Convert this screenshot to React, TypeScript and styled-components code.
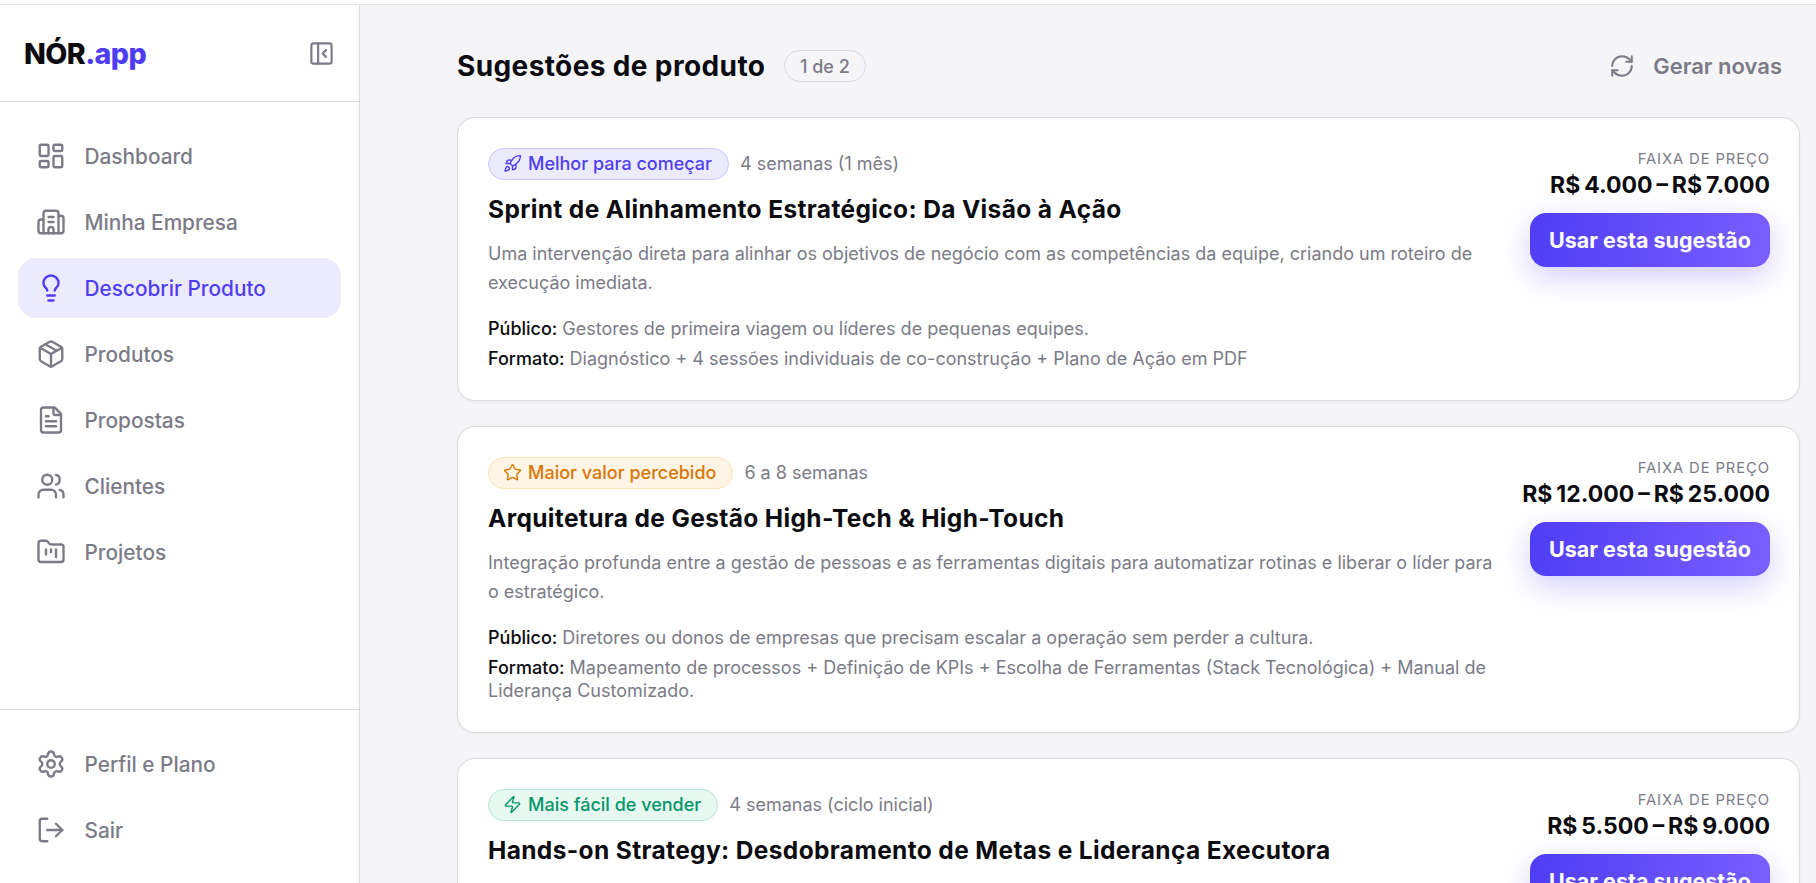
import * as React from "react";
import styled, {createGlobalStyle} from "styled-components";
import {
  Building2,
  FileText,
  FolderKanban,
  LayoutDashboard,
  Lightbulb,
  LogOut,
  Package,
  PanelLeftClose,
  RefreshCw,
  Rocket,
  Settings,
  Star,
  Users,
  Zap,
} from "lucide-react";

const headingFont = `"Inter", "Liberation Sans", sans-serif`;

const GlobalStyle = createGlobalStyle`
  html, body {
    margin: 0;
    height: 100%;
    overflow: hidden;
    background: #f5f5f8;
    font-family: "Inter", "Liberation Sans", sans-serif;
  }
  #root { height: 100%; }
`;

const Page = styled.div`
  height: 883px;
  display: flex;
  flex-direction: column;
  overflow: hidden;
`;

const TopStrip = styled.div`
  flex: none;
  height: 4px;
  background: #fff;
  border-bottom: 1px solid #e2e2e6;
`;

const Shell = styled.div`
  flex: 1;
  min-height: 0;
  display: flex;
`;

const Sidebar = styled.aside`
  flex: none;
  box-sizing: border-box;
  width: 360px;
  display: flex;
  flex-direction: column;
  background: #fff;
  border-right: 1px solid #d9d9de;
`;

const SidebarHead = styled.div`
  flex: none;
  box-sizing: border-box;
  height: 97px;
  padding: 0 24px 0 24px;
  display: flex;
  align-items: center;
  justify-content: space-between;
  border-bottom: 1px solid #d9d9de;
`;

const Logo = styled.div`
  font-family: ${headingFont};
  font-weight: 800;
  font-size: 28.6px;
  letter-spacing: -0.6px;
  color: #0b0b10;
  span { color: #4f3df5; }
`;

const CollapseButton = styled.div`
  display: flex;
  color: #7b7b88;
`;

const NavList = styled.nav`
  flex: 1;
  padding: 24px 18px 0;
  display: flex;
  flex-direction: column;
  gap: 6px;
`;

const BottomNav = styled.nav`
  flex: none;
  box-sizing: border-box;
  height: 174px;
  padding: 24px 18px 0;
  display: flex;
  flex-direction: column;
  gap: 6px;
  border-top: 1px solid #d9d9de;
`;

const NavItem = styled.a<{$active?: boolean}>`
  height: 60px;
  padding: 0 18px;
  display: flex;
  align-items: center;
  gap: 18.5px;
  border-radius: 18px;
  font-size: 20.8px;
  font-weight: 500;
  color: ${(p) => (p.$active ? "#4f3df5" : "#7b7b88")};
  background: ${(p) => (p.$active ? "#ecebfd" : "transparent")};
`;

const Main = styled.main`
  flex: 1;
  min-width: 0;
  padding: 0 16px 0 97px;
  overflow: hidden;
`;

const Header = styled.header`
  box-sizing: border-box;
  height: 112px;
  padding-top: 10px;
  display: flex;
  align-items: center;
  justify-content: space-between;
`;

const HeaderLeft = styled.div`
  display: flex;
  align-items: center;
  gap: 18.5px;
`;

const PageTitle = styled.h1`
  margin: 0;
  font-family: ${headingFont};
  font-size: 28px;
  letter-spacing: 0.38px;
  font-weight: 700;
  color: #0b0b10;
`;

const CountPill = styled.span`
  box-sizing: border-box;
  width: 82px;
  height: 32px;
  display: flex;
  align-items: center;
  justify-content: center;
  border: 1px solid #d9d9de;
  border-radius: 16px;
  font-size: 18px;
  font-weight: 500;
  color: #7b7b88;
`;

const RegenerateButton = styled.div`
  padding-right: 18px;
  display: flex;
  align-items: center;
  gap: 18px;
  font-family: ${headingFont};
  font-size: 22px;
  font-weight: 600;
  color: #7b7b88;
`;

const CardList = styled.div`
  display: flex;
  flex-direction: column;
  gap: 25px;
`;

const Card = styled.article`
  box-sizing: border-box;
  padding: 30px 29px 30px 30px;
  display: flex;
  justify-content: space-between;
  gap: 32px;
  background: #fff;
  border: 1px solid #d9d9de;
  border-radius: 18px;
  box-shadow: 0 1px 3px rgba(20, 20, 40, 0.05);
`;

const CardBody = styled.div`
  flex: 1;
  min-width: 0;
`;

const TagRow = styled.div`
  height: 32px;
  display: flex;
  align-items: center;
  gap: 11.5px;
`;

const tagColors = {
  violet: {bg: "#ecebfd", border: "#c9c5fa", fg: "#4f3df5"},
  amber: {bg: "#fff4e5", border: "#fde3b8", fg: "#d97706"},
  green: {bg: "#e7f8f1", border: "#b5e8d3", fg: "#059669"},
};
type TagTone = keyof typeof tagColors;

const Tag = styled.span<{$tone: TagTone}>`
  box-sizing: border-box;
  height: 32px;
  padding: 0 15.5px 1px 14px;
  display: flex;
  align-items: center;
  gap: 6px;
  border-radius: 16px;
  font-size: 18px;
  font-weight: 500;
  color: ${(p) => tagColors[p.$tone].fg};
  background: ${(p) => tagColors[p.$tone].bg};
  border: 1px solid ${(p) => tagColors[p.$tone].border};
`;

const Duration = styled.span`
  padding-bottom: 1px;
  font-size: 18px;
  color: #7b7b88;
`;

const CardTitle = styled.h2`
  margin: 11px 0 0;
  font-family: ${headingFont};
  font-size: 24.5px;
  letter-spacing: 0.36px;
  line-height: 36px;
  font-weight: 700;
  color: #0b0b10;
`;

const Description = styled.p`
  margin: 13px 0 0;
  font-size: 18px;
  line-height: 28.95px;
  color: #7b7b88;
`;

const DetailBlock = styled.div`
  margin-top: 19px;
  display: flex;
  flex-direction: column;
  gap: 6.9px;
`;

const Detail = styled.p`
  margin: 0;
  font-size: 18px;
  line-height: 23.16px;
  color: #7b7b88;
  b {
    font-weight: 500;
    color: #0b0b10;
  }
`;

const PriceColumn = styled.div`
  flex: none;
  width: 240px;
  display: flex;
  flex-direction: column;
  align-items: flex-end;
`;

const PriceLabel = styled.div`
  font-size: 14.8px;
  line-height: 22px;
  letter-spacing: 0.9px;
  color: #7b7b88;
`;

const PriceValue = styled.div`
  margin-top: 1px;
  font-family: ${headingFont};
  font-size: 23px;
  word-spacing: -1.5px;
  line-height: 29px;
  font-weight: 700;
  white-space: nowrap;
  color: #0b0b10;
`;

const UseButton = styled.button`
  margin-top: 13px;
  box-sizing: border-box;
  width: 240px;
  height: 54px;
  flex: none;
  border: 0;
  border-radius: 16px;
  font-family: ${headingFont};
  font-size: 21.5px;
  font-weight: 700;
  color: #fff;
  background: linear-gradient(100deg, #4f3df5, #7a5fff);
  box-shadow: 0 10px 30px rgba(79, 61, 245, 0.25);
`;

const mainNav = [
  {label: "Dashboard", icon: LayoutDashboard},
  {label: "Minha Empresa", icon: Building2},
  {label: "Descobrir Produto", icon: Lightbulb, active: true},
  {label: "Produtos", icon: Package},
  {label: "Propostas", icon: FileText},
  {label: "Clientes", icon: Users},
  {label: "Projetos", icon: FolderKanban},
];

const suggestions = [
  {
    tone: "violet" as TagTone,
    tagIcon: Rocket,
    tag: "Melhor para começar",
    duration: "4 semanas (1 mês)",
    title: "Sprint de Alinhamento Estratégico: Da Visão à Ação",
    description:
      "Uma intervenção direta para alinhar os objetivos de negócio com as competências da equipe, criando um roteiro de execução imediata.",
    audience: "Gestores de primeira viagem ou líderes de pequenas equipes.",
    format: "Diagnóstico + 4 sessões individuais de co-construção + Plano de Ação em PDF",
    price: "R$ 4.000 – R$ 7.000",
  },
  {
    tone: "amber" as TagTone,
    tagIcon: Star,
    tag: "Maior valor percebido",
    duration: "6 a 8 semanas",
    title: "Arquitetura de Gestão High-Tech & High-Touch",
    description:
      "Integração profunda entre a gestão de pessoas e as ferramentas digitais para automatizar rotinas e liberar o líder para o estratégico.",
    audience: "Diretores ou donos de empresas que precisam escalar a operação sem perder a cultura.",
    format:
      "Mapeamento de processos + Definição de KPIs + Escolha de Ferramentas (Stack Tecnológica) + Manual de Liderança Customizado.",
    price: "R$ 12.000 – R$ 25.000",
  },
  {
    tone: "green" as TagTone,
    tagIcon: Zap,
    tag: "Mais fácil de vender",
    duration: "4 semanas (ciclo inicial)",
    title: "Hands-on Strategy: Desdobramento de Metas e Liderança Executora",
    price: "R$ 5.500 – R$ 9.000",
  },
];

export default function App() {
  return (
    <Page>
      <GlobalStyle />
      <TopStrip />
      <Shell>
        <Sidebar>
          <SidebarHead>
            <Logo>
              NÓR<span>.app</span>
            </Logo>
            <CollapseButton>
              <PanelLeftClose size={27} strokeWidth={1.9} />
            </CollapseButton>
          </SidebarHead>
          <NavList>
            {mainNav.map(({label, icon: Icon, active}) => (
              <NavItem key={label} $active={active}>
                <Icon size={30} strokeWidth={1.9} />
                {label}
              </NavItem>
            ))}
          </NavList>
          <BottomNav>
            <NavItem>
              <Settings size={30} strokeWidth={1.9} />
              Perfil e Plano
            </NavItem>
            <NavItem>
              <LogOut size={30} strokeWidth={1.9} />
              Sair
            </NavItem>
          </BottomNav>
        </Sidebar>
        <Main>
          <Header>
            <HeaderLeft>
              <PageTitle>Sugestões de produto</PageTitle>
              <CountPill>1 de 2</CountPill>
            </HeaderLeft>
            <RegenerateButton>
              <RefreshCw size={26} strokeWidth={1.9} />
              Gerar novas
            </RegenerateButton>
          </Header>
          <CardList>
            {suggestions.map((s) => (
              <Card key={s.title}>
                <CardBody>
                  <TagRow>
                    <Tag $tone={s.tone}>
                      <s.tagIcon size={19} strokeWidth={1.75} />
                      {s.tag}
                    </Tag>
                    <Duration>{s.duration}</Duration>
                  </TagRow>
                  <CardTitle>{s.title}</CardTitle>
                  {s.description && <Description>{s.description}</Description>}
                  {s.audience && (
                    <DetailBlock>
                      <Detail>
                        <b>Público:</b> {s.audience}
                      </Detail>
                      <Detail>
                        <b>Formato:</b> {s.format}
                      </Detail>
                    </DetailBlock>
                  )}
                </CardBody>
                <PriceColumn>
                  <PriceLabel>FAIXA DE PREÇO</PriceLabel>
                  <PriceValue>{s.price}</PriceValue>
                  <UseButton>Usar esta sugestão</UseButton>
                </PriceColumn>
              </Card>
            ))}
          </CardList>
        </Main>
      </Shell>
    </Page>
  );
}
